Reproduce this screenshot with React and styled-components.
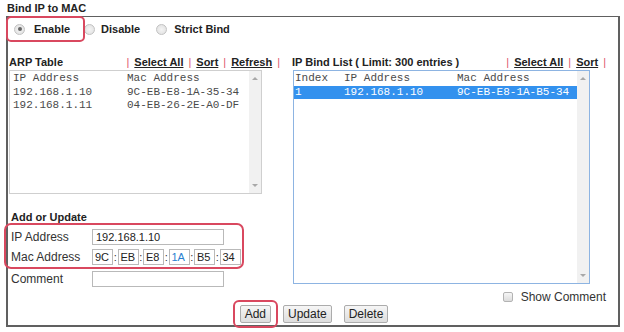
import styled, { createGlobalStyle } from "styled-components";

const GlobalStyle = createGlobalStyle`
    body {
        margin: 0;
        background: #ffffff;
        font-family: "Liberation Sans", Arial, sans-serif;
        color: #222;
    }
`;

const Page = styled.div`
    width: 624px;
    height: 332px;
    overflow: hidden;
`;

const Title = styled.div`
    height: 16px;
    line-height: 16px;
    padding-left: 7px;
    font-size: 11px;
    font-weight: bold;
`;

const Panel = styled.div`
    margin-left: 6px;
    width: 610px;
    border: 2px solid #606060;
    border-top-width: 1px;
    padding: 0 0 2px 0;
`;

const RadioRow = styled.div`
    display: flex;
    align-items: center;
    height: 22px;
    margin-top: 1px;
`;

const Mark = styled.span`
    position: absolute;
    inset: -2px;
    border: 2px solid #d9485f;
    border-radius: 5px;
    pointer-events: none;
`;

const Highlight = styled.div`
    position: relative;
    display: flex;
    align-items: center;
`;

const RadioOption = styled.label`
    display: flex;
    align-items: center;
    gap: ${(p) => p.$gap || 7}px;
    margin-left: ${(p) => p.$ml || 0}px;
    padding: ${(p) => p.$pad || "0"};
    height: 22px;
    font-size: 11px;
    font-weight: bold;
    color: #222;
`;

const Radio = styled.span`
    width: 9px;
    height: 9px;
    border-radius: 50%;
    border: 1px solid #c2c2c2;
    background: radial-gradient(circle, #f4f4f4 0%, #dedede 100%);
    display: flex;
    align-items: center;
    justify-content: center;
    &::after {
        content: "";
        width: 4px;
        height: 4px;
        border-radius: 50%;
        background: ${(p) => (p.$checked ? "#666" : "transparent")};
    }
`;

const Columns = styled.div`
    display: grid;
    grid-template-columns: 271px 314px;
    column-gap: 12px;
    margin-top: 14px;
    padding-left: 1px;
`;

const Column = styled.div`
    display: flex;
    flex-direction: column;
`;

const Header = styled.div`
    display: flex;
    justify-content: space-between;
    align-items: center;
    height: 15px;
    margin-bottom: 1px;
`;

const HeaderTitle = styled.span`
    font-size: 11px;
    font-weight: bold;
`;

const Links = styled.span`
    display: flex;
    align-items: center;
    font-size: 11px;
`;

const Pipe = styled.span`
    color: #e0566b;
`;

const Link = styled.a`
    font-weight: bold;
    color: #222;
    text-decoration: underline;
    padding: 0 5px;
`;

const ListBox = styled.div`
    display: flex;
    width: ${(p) => p.$w}px;
    height: ${(p) => p.$h}px;
    margin-left: ${(p) => p.$ml || 0}px;
    border: 1px solid ${(p) => p.$border};
    box-sizing: border-box;
    background: #fff;
`;

const ListBody = styled.div`
    flex: 1;
    padding-top: 1px;
    font-family: "Liberation Mono", "Courier New", monospace;
    font-size: 11px;
    color: #4a4a4a;
`;

const ListRow = styled.div`
    display: grid;
    grid-template-columns: ${(p) => p.$cols};
    height: 13.5px;
    line-height: 13.5px;
    padding-left: ${(p) => p.$pl}px;
    white-space: pre;
    background: ${(p) => (p.$selected ? "#3391ee" : "transparent")};
    color: ${(p) => (p.$selected ? "#fff" : "inherit")};
`;

const Scrollbar = styled.div`
    width: 12px;
    background: #f1f1f1;
    display: flex;
    flex-direction: column;
    justify-content: space-between;
    align-items: center;
    padding: 6px 0;
`;

const Arrow = styled.span`
    width: 0;
    height: 0;
    border-left: 3px solid transparent;
    border-right: 3px solid transparent;
    ${(p) =>
        p.$down
            ? "border-top: 3px solid #a8a8a8;"
            : "border-bottom: 3px solid #a8a8a8;"}
`;

const SectionTitle = styled.div`
    margin-top: 18px;
    height: 11px;
    line-height: 11px;
    padding-left: 2px;
    font-size: 11px;
    font-weight: bold;
`;

const FormHighlight = styled.div`
    width: 231px;
    margin-left: -5px;
    padding: 2px 0 0 5px;
    border: 2px solid #d9485f;
    border-radius: 7px;
`;

const FormRow = styled.div`
    display: grid;
    grid-template-columns: 81px auto;
    align-items: center;
    height: ${(p) => p.$h || 20}px;
    padding-left: ${(p) => p.$pl || 0}px;
    font-size: 12px;
    color: #333;
`;

const TextInput = styled.div`
    width: 132px;
    height: 16px;
    box-sizing: border-box;
    border: 1px solid #b9b9b9;
    padding-left: 3px;
    font-size: 11px;
    line-height: 14px;
    color: #222;
    background: #fff;
`;

const MacFields = styled.div`
    display: flex;
    align-items: center;
`;

const MacInput = styled.div`
    width: 21px;
    height: 16px;
    box-sizing: border-box;
    border: 1px solid #b9b9b9;
    padding-left: 2px;
    font-size: 11px;
    line-height: 14px;
    color: ${(p) => p.$color || "#222"};
    background: #fff;
`;

const Colon = styled.span`
    width: 4.5px;
    text-align: center;
    font-size: 11px;
`;

const ShowComment = styled.label`
    display: flex;
    align-items: center;
    justify-content: flex-end;
    gap: 8px;
    height: 16px;
    margin-top: 5px;
    font-size: 12px;
    color: #333;
`;

const Checkbox = styled.span`
    width: 8px;
    height: 8px;
    border: 1px solid #b3b3b3;
    border-radius: 2px;
    background: linear-gradient(#f6f6f6, #dcdcdc);
`;

const ButtonRow = styled.div`
    display: flex;
    justify-content: center;
    gap: 12px;
    padding-left: 2px;
`;

const ButtonMark = styled.div`
    display: flex;
    padding: 3px 5px;
    margin: -5px -7px;
    border: 2px solid #d9485f;
    border-radius: 6px;
`;

const Button = styled.button`
    height: 18px;
    padding: 0 4px;
    border: 1px solid #acacac;
    border-radius: 2px;
    background: linear-gradient(#f6f6f6, #dddddd);
    font-family: "Liberation Sans", Arial, sans-serif;
    font-size: 12px;
    color: #222;
`;

const arpRows = [
    ["IP Address", "Mac Address"],
    ["192.168.1.10", "9C-EB-E8-1A-35-34"],
    ["192.168.1.11", "04-EB-26-2E-A0-DF"],
];

const bindRows = [
    { cells: ["Index", "IP Address", "Mac Address"] },
    { cells: ["1", "192.168.1.10", "9C-EB-E8-1A-B5-34"], selected: true },
];

const macParts = [
    { v: "9C" },
    { v: "EB" },
    { v: "E8" },
    { v: "1A", c: "#2a7fd0" },
    { v: "B5" },
    { v: "34" },
];

const App = () => {
    return (
        <>
            <GlobalStyle />
            <Page>
                <Title>Bind IP to MAC</Title>
                <Panel>
                    <RadioRow>
                        <Highlight>
                            <Mark />
                            <RadioOption $pad="0 13px 0 6px" $gap={9}>
                                <Radio $checked />
                                Enable
                            </RadioOption>
                        </Highlight>
                        <RadioOption $ml={1} $gap={6}>
                            <Radio />
                            Disable
                        </RadioOption>
                        <RadioOption $ml={16} $gap={7}>
                            <Radio />
                            Strict Bind
                        </RadioOption>
                    </RadioRow>

                    <Columns>
                        <Column>
                            <Header>
                                <HeaderTitle>ARP Table</HeaderTitle>
                                <Links>
                                    <Pipe>|</Pipe>
                                    <Link>Select All</Link>
                                    <Pipe>|</Pipe>
                                    <Link>Sort</Link>
                                    <Pipe>|</Pipe>
                                    <Link>Refresh</Link>
                                    <Pipe>|</Pipe>
                                </Links>
                            </Header>
                            <ListBox $w={253} $h={124} $border="#cfcfcf">
                                <ListBody>
                                    {arpRows.map((r) => (
                                        <ListRow key={r[0]} $cols="114px auto" $pl={3}>
                                            <span>{r[0]}</span>
                                            <span>{r[1]}</span>
                                        </ListRow>
                                    ))}
                                </ListBody>
                                <Scrollbar>
                                    <Arrow />
                                    <Arrow $down />
                                </Scrollbar>
                            </ListBox>

                            <SectionTitle>Add or Update</SectionTitle>
                            <FormHighlight>
                                <FormRow>
                                    <span>IP Address</span>
                                    <TextInput>192.168.1.10</TextInput>
                                </FormRow>
                                <FormRow>
                                    <span>Mac Address</span>
                                    <MacFields>
                                        {macParts.map((m, i) => (
                                            <MacFields key={i}>
                                                {i > 0 && <Colon>:</Colon>}
                                                <MacInput $color={m.c}>{m.v}</MacInput>
                                            </MacFields>
                                        ))}
                                    </MacFields>
                                </FormRow>
                            </FormHighlight>
                            <FormRow $pl={2} $h={19}>
                                <span>Comment</span>
                                <TextInput />
                            </FormRow>
                        </Column>

                        <Column>
                            <Header>
                                <HeaderTitle>IP Bind List ( Limit: 300 entries )</HeaderTitle>
                                <Links>
                                    <Pipe>|</Pipe>
                                    <Link>Select All</Link>
                                    <Pipe>|</Pipe>
                                    <Link>Sort</Link>
                                    <Pipe>|</Pipe>
                                </Links>
                            </Header>
                            <ListBox $w={297} $h={214} $ml={1} $border="#8db4e2">
                                <ListBody>
                                    {bindRows.map((r) => (
                                        <ListRow
                                            key={r.cells[0]}
                                            $cols="49px 113px auto"
                                            $pl={1}
                                            $selected={r.selected}
                                        >
                                            {r.cells.map((c) => (
                                                <span key={c}>{c}</span>
                                            ))}
                                        </ListRow>
                                    ))}
                                </ListBody>
                                <Scrollbar>
                                    <Arrow />
                                    <Arrow $down />
                                </Scrollbar>
                            </ListBox>
                            <ShowComment>
                                <Checkbox />
                                Show Comment
                            </ShowComment>
                        </Column>
                    </Columns>

                    <ButtonRow>
                        <ButtonMark>
                            <Button>Add</Button>
                        </ButtonMark>
                        <Button>Update</Button>
                        <Button>Delete</Button>
                    </ButtonRow>
                </Panel>
            </Page>
        </>
    );
};

export default App;
